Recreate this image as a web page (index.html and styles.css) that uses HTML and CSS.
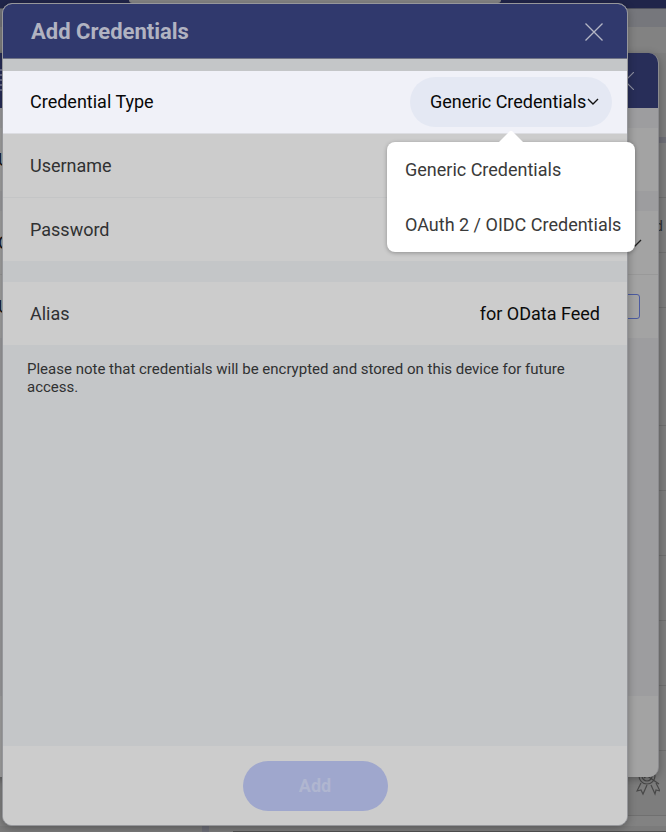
FILE: index.html
```html
<!DOCTYPE html>
<html lang="en">
<head>
  <meta charset="utf-8">
  <meta name="viewport" content="width=device-width, initial-scale=1">
  <title>Add Credentials</title>
  <link rel="stylesheet" href="styles.css">
</head>
<body>
  <div class="workspace" aria-hidden="true">
    <div class="topbar"><div class="topbar-tab"></div></div>
    <div class="toolbar"></div>
    <div class="workspace-body">
      <div class="list">
        <div class="list-head"></div>
        <div class="list-row"></div>
        <div class="list-row list-row-label">d</div>
        <div class="list-row"></div>
        <div class="list-row list-row-tall"></div>
        <div class="list-row list-row-wide"></div>
        <div class="list-row list-row-wide"></div>
        <div class="list-row list-row-wide"></div>
        <div class="list-row list-row-wide"></div>
        <div class="list-row list-row-wide"></div>
        <div class="list-row list-row-wide list-row-badge">
          <svg width="24" height="32" viewBox="0 0 24 32" fill="none" stroke="#484848" stroke-width="1.2">
            <circle cx="11" cy="11" r="8"/><circle cx="11" cy="11" r="5"/>
            <path d="M8 13l6-5M5 18L1 26l4-1 2 4 4-9M15 20l4 9 1-4 4 1-4-8M7 8l16 11"/>
          </svg>
        </div>
      </div>
    </div>
    <div class="workspace-foot"><span class="foot-divider"></span><span class="foot-line"></span></div>
  </div>

  <section class="parent-dialog" aria-hidden="true">
    <div class="parent-header">
      <span class="parent-mark"></span>
      <svg class="parent-close" width="18" height="18" viewBox="0 0 18 18" fill="none" stroke="#8d90a1" stroke-width="1.2"><path d="M0 0l18 18M18 0L0 18"/></svg>
    </div>
    <div class="parent-body">
      <div class="parent-row">U</div>
      <div class="parent-gap"></div>
      <div class="parent-row parent-row-line">C
        <svg width="14" height="8" viewBox="0 0 14 8" fill="none" stroke="#222" stroke-width="1.4"><path d="M1 1l6 6 6-6"/></svg>
      </div>
      <div class="parent-row">U <span class="parent-box"></span></div>
    </div>
    <div class="parent-footer"></div>
  </section>

  <main class="dialog">
    <header class="dialog-header">
      <h1>Add Credentials</h1>
      <button class="close" type="button" aria-label="Close">
        <svg width="18" height="18" viewBox="0 0 18 18" fill="none" stroke="#b4b6c5" stroke-width="1.3"><path d="M.5 .5l17 17M17.5 .5l-17 17"/></svg>
      </button>
    </header>
    <form class="form">
      <div class="row row-active">
        <label for="type">Credential Type</label>
        <div class="picker">
          <select id="type">
            <option>Generic Credentials</option>
            <option>OAuth 2 / OIDC Credentials</option>
          </select>
          <svg class="chevron" width="12" height="8" viewBox="0 0 12 8" fill="none" stroke="#111" stroke-width="1.4"><path d="M1 1l5 5 5-5"/></svg>
          <div class="menu">
            <svg class="menu-arrow" width="32" height="16" viewBox="0 0 32 16"><path d="M0 16L14.500 1.500q1.500-1.500 3 0L32 16z" fill="#fff"/></svg>
            <button type="button">Generic Credentials</button>
            <button type="button">OAuth 2 / OIDC Credentials</button>
          </div>
        </div>
      </div>
      <div class="row row-line">
        <label for="username">Username</label>
        <input id="username" type="text">
      </div>
      <div class="row">
        <label for="password">Password</label>
        <input id="password" type="password">
      </div>
      <div class="row row-spaced">
        <label for="alias">Alias</label>
        <input id="alias" type="text" value="for OData Feed">
      </div>
      <p class="note">Please note that credentials will be encrypted and stored on this device for future access.</p>
    </form>
    <footer class="dialog-footer">
      <button class="add" type="button">Add</button>
    </footer>
  </main>
</body>
</html>
```
FILE: styles.css
```css
* { box-sizing: border-box; }

body {
  margin: 0;
  min-height: 100vh;
  padding: 3px 38px 6px 2px;
  display: flex;
  position: relative;
  overflow: hidden;
  background: #808080;
  color: #303132;
  font: 18px/24px Roboto, "Liberation Sans", sans-serif;
}

button, input, select { font: inherit; color: inherit; }
svg { display: block; }

/* Dimmed application behind the dialogs */
.workspace {
  position: absolute;
  inset: 0;
  display: flex;
  flex-direction: column;
}
.topbar { height: 9px; padding: 0 165px 0 129px; background: #20254a; border-bottom: 1px solid #50525e; }
.topbar-tab { height: 3px; border-radius: 0 0 3px 3px; background: #858585; }
.toolbar { height: 18px; background: #76777c; }
.workspace-body { flex: 1; background: #828282; overflow: hidden; }
.list { width: 60px; margin-left: auto; margin-top: 26px; background: #7d7d7d; }
.list-head { height: 90px; border-bottom: 6px solid #6d6e76; }
.list-row { height: 55px; border-bottom: 1px solid #707070; }
.list-row-tall { height: 118px; }
.list-row-wide { height: 65px; }
.list-row-label { padding: 16px 3px 0 0; text-align: right; font-size: 15px; }
.list-row-badge { padding: 14px 0 0 30px; }
.workspace-foot { height: 6px; display: flex; align-items: flex-end; gap: 24px; padding-left: 202px; background: #7b7b7b; }
.foot-divider { width: 7px; height: 6px; background: #6e6f78; }
.foot-line { flex: 1; height: 1px; background: #505050; }

/* Parent dialog */
.parent-dialog {
  position: absolute;
  inset: 53px 7px 55px -31px;
  display: flex;
  flex-direction: column;
  overflow: hidden;
  border-right: 1px solid #8b8b8e;
  border-radius: 10px;
  background: #9d9d9f;
  box-shadow: 0 2px 8px rgba(0, 0, 0, .3);
  color: #161616;
}
.parent-header { height: 55px; display: flex; align-items: center; justify-content: space-between; padding: 0 24px 0 30px; background: #282e59; }
.parent-mark { width: 12px; height: 24px; background: repeating-linear-gradient(#6b6f8d 0 2px, #282e59 2px 5px); }
.parent-body { flex: 1; padding-top: 20px; }
.parent-row { height: 63px; display: flex; align-items: center; justify-content: space-between; padding: 0 16px 0 29px; background: #a3a3a3; }
.parent-row-line { height: 64px; border-bottom: 1px solid #999; }
.parent-gap { height: 20px; }
.parent-box { width: 25px; height: 25px; margin-right: 2px; border: 1px solid #4c5ba0; border-radius: 3px; }
.parent-footer { height: 81px; background: #a3a3a3; }

/* Front dialog */
.dialog {
  position: relative;
  flex: 1;
  display: flex;
  flex-direction: column;
  border: 1px solid #96979b;
  border-radius: 10px;
  background: #c4c6c8;
  box-shadow: 0 2px 8px rgba(0, 0, 0, .3);
}
.dialog-header {
  height: 55px;
  display: flex;
  align-items: center;
  justify-content: space-between;
  padding: 1px 24px 0 28px;
  border-bottom: 1px solid #6f7385;
  border-radius: 9px 9px 0 0;
  background: #30396d;
}
h1 { margin: 0; color: #b1b3c1; font-size: 22px; line-height: 28px; font-weight: 700; }
.close { padding: 0; border: 0; background: none; }
.form { flex: 1; padding-top: 12px; }
.row { height: 63px; display: flex; align-items: center; justify-content: space-between; padding: 0 27px; background: #ccc; }
.row-line { height: 64px; border-bottom: 1px solid #c4c5c6; }
.row-active { padding-right: 15px; border-bottom: 1px solid #dcdde2; background: #f0f1f8; color: #080808; }
.row-spaced { margin-top: 21px; }
.row input { width: 260px; padding: 0; border: 0; outline: 0; background: none; text-align: right; color: #0b0b0b; }

.picker { position: relative; }
.picker select {
  display: block;
  width: 202px;
  height: 50px;
  padding: 0 16px 0 20px;
  border: 0;
  border-radius: 25px;
  outline: 0;
  appearance: none;
  background: #e4e8f3;
}
.chevron { position: absolute; top: 21px; right: 13px; pointer-events: none; }

.menu {
  position: absolute;
  top: 65px;
  right: -23px;
  z-index: 1;
  width: 248px;
  border-radius: 8px;
  background: #fff;
  box-shadow: 0 1px 4px rgba(0, 0, 0, .3);
}
.menu-arrow { position: absolute; top: -12px; left: 108px; }
.menu button {
  display: block;
  width: 100%;
  height: 55px;
  padding: 0 18px;
  border: 0;
  background: none;
  color: #3a3a3a;
  text-align: left;
  white-space: nowrap;
}

.note { margin: 15px 24px; font-size: 15px; line-height: 18px; }
.dialog-footer {
  height: 79px;
  display: flex;
  align-items: center;
  justify-content: center;
  border-radius: 0 0 9px 9px;
  background: #ccc;
}
.add {
  width: 145px;
  height: 50px;
  border: 0;
  border-radius: 25px;
  background: #9fa7cd;
  color: #b0b6d0;
  font-weight: 700;
}
```
